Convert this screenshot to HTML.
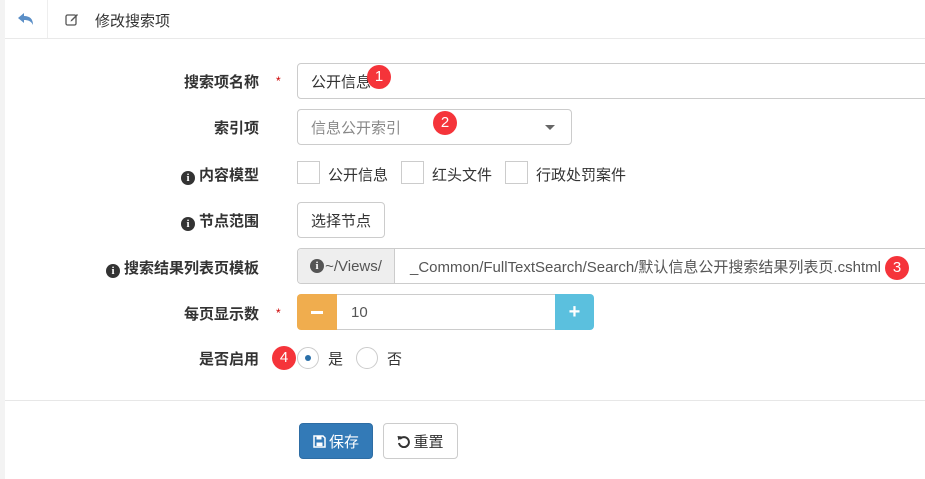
<!DOCTYPE html>
<html><head><meta charset="utf-8"><style>
*{box-sizing:border-box;margin:0;padding:0}
body{width:925px;height:479px;overflow:hidden;background:#fff;font-family:"Liberation Sans","Noto Sans CJK SC",sans-serif;font-size:15px;color:#333;position:relative}
.strip{position:absolute;left:0;top:0;width:5px;height:479px;background:#f3f3f3}
.hdr{position:absolute;left:5px;top:0;right:0;height:39px;border-bottom:1px solid #e9e9e9}
.back{position:absolute;left:0;top:0;width:43px;height:38px;border-right:1px solid #eee}
.ttl{position:absolute;top:10px;font-size:15px;color:#333}
.lbl{position:absolute;right:666px;font-weight:bold;font-size:15px;color:#333;white-space:nowrap}
.star{position:absolute;left:276px;color:#c00;font-size:12px}
.in{position:absolute;border:1px solid #ccc;border-radius:4px;background:#fff;padding:0 13px;display:flex;align-items:center;font-size:15px;color:#555}
.badge{position:absolute;width:24px;height:24px;border-radius:50%;background:#f5343a;color:#fff;font-size:15px;text-align:center;line-height:24px}
.cb{position:absolute;top:161px;width:23px;height:23px;border:1px solid #ccc}
.t{position:absolute;font-size:15px}
.i{display:inline-block;width:14px;height:14px;border-radius:50%;background:#333;color:#fff;font-size:11px;line-height:14px;text-align:center;font-weight:bold;font-family:"Liberation Serif",serif;margin-right:4px;vertical-align:-1px}
.btn{position:absolute;border-radius:4px;display:flex;align-items:center;justify-content:center;font-size:15px}
</style></head><body>
<div class="strip"></div>
<div class="hdr">
 <div class="back"><svg width="43" height="38" viewBox="0 0 43 38"><path d="M13 18 L19 13 L19 16 C25 16 28 19 28 25 C26 21 23 20 19 20 L19 23 Z" fill="#5b8fc7"/></svg></div>
 <svg style="position:absolute;left:60px;top:12px" width="14" height="14" viewBox="0 0 14 14"><rect x="1" y="3" width="10" height="10" rx="1.5" fill="none" stroke="#555" stroke-width="1.3"/><path d="M6 8 L12 2 L13 3 L7 9 L5.5 9.5Z" fill="#555"/></svg>
 <div class="ttl" style="left:90px">修改搜索项</div>
</div>
<div class="lbl" style="top:71px">搜索项名称</div><div class="star" style="top:74px">*</div>
<div class="in" style="left:297px;top:63px;width:640px;height:36px;color:#333">公开信息</div>
<div class="badge" style="left:367px;top:65px">1</div>
<div class="lbl" style="top:117px">索引项</div>
<div class="in" style="left:297px;top:109px;width:275px;height:36px;color:#888">信息公开索引<svg style="position:absolute;right:16px;top:15px" width="10" height="6"><path d="M0 0 L10 0 L5 5Z" fill="#666"/></svg></div>
<div class="badge" style="left:433px;top:111px">2</div>
<div class="lbl" style="top:164px"><span class="i">i</span>内容模型</div>
<div class="cb" style="left:297px"></div><div class="t" style="left:328px;top:164px">公开信息</div>
<div class="cb" style="left:401px"></div><div class="t" style="left:432px;top:164px">红头文件</div>
<div class="cb" style="left:505px"></div><div class="t" style="left:536px;top:164px">行政处罚案件</div>
<div class="lbl" style="top:210px"><span class="i">i</span>节点范围</div>
<div class="btn" style="left:297px;top:202px;width:88px;height:36px;border:1px solid #ccc">选择节点</div>
<div class="lbl" style="top:257px"><span class="i">i</span>搜索结果列表页模板</div>
<div class="in" style="left:297px;top:248px;width:640px;height:36px;padding:0"><div style="width:97px;height:34px;background:#eee;border-right:1px solid #ccc;display:flex;align-items:center;justify-content:center;color:#555;border-radius:4px 0 0 4px"><span class="i" style="background:#555;margin-right:1px">i</span>~/Views/</div><div style="padding-left:15px;color:#555">_Common/FullTextSearch/Search/默认信息公开搜索结果列表页.cshtml</div></div>
<div class="badge" style="left:885px;top:256px">3</div>
<div class="lbl" style="top:303px">每页显示数</div><div class="star" style="top:306px">*</div>
<div class="in" style="left:336px;top:294px;width:220px;height:36px;border-radius:0;padding-left:14px">10</div>
<div class="btn" style="left:297px;top:294px;width:40px;height:36px;background:#f0ad4e;border-radius:4px 0 0 4px"><div style="width:12px;height:3px;background:#fff"></div></div>
<div class="btn" style="left:555px;top:294px;width:39px;height:36px;background:#5bc0de;border-radius:0 4px 4px 0;color:#fff;font-weight:bold;font-size:20px">+</div>
<div class="lbl" style="top:348px">是否启用</div>
<div class="badge" style="left:272px;top:346px">4</div>
<div style="position:absolute;left:297px;top:347px;width:22px;height:22px;border:1px solid #ccc;border-radius:50%"><div style="position:absolute;left:7px;top:7px;width:6px;height:6px;border-radius:50%;background:#2a6fa8"></div></div>
<div class="t" style="left:328px;top:348px">是</div>
<div style="position:absolute;left:356px;top:347px;width:22px;height:22px;border:1px solid #ccc;border-radius:50%"></div>
<div class="t" style="left:387px;top:348px">否</div>
<div style="position:absolute;left:5px;right:0;top:400px;height:1px;background:#e7e7e7"></div>
<div class="btn" style="left:299px;top:423px;width:74px;height:36px;background:#337ab7;border:1px solid #2e6da4;color:#fff"><svg width="13" height="13" viewBox="0 0 13 13" style="margin-right:3px"><path d="M1 1 H10 L12 3 V12 H1Z" fill="none" stroke="#fff" stroke-width="1.5"/><rect x="3.5" y="1" width="5" height="3.5" fill="#fff"/><rect x="3.5" y="7.5" width="6" height="3.5" fill="#fff"/></svg>保存</div>
<div class="btn" style="left:383px;top:423px;width:75px;height:36px;border:1px solid #ccc"><svg width="13" height="13" viewBox="0 0 13 13" style="margin-right:3px"><path d="M3 4 A5 5 0 1 1 2 8" fill="none" stroke="#333" stroke-width="2"/><path d="M0.5 1 L5 1.5 L1.5 5.5Z" fill="#333"/></svg>重置</div>
</body></html>
